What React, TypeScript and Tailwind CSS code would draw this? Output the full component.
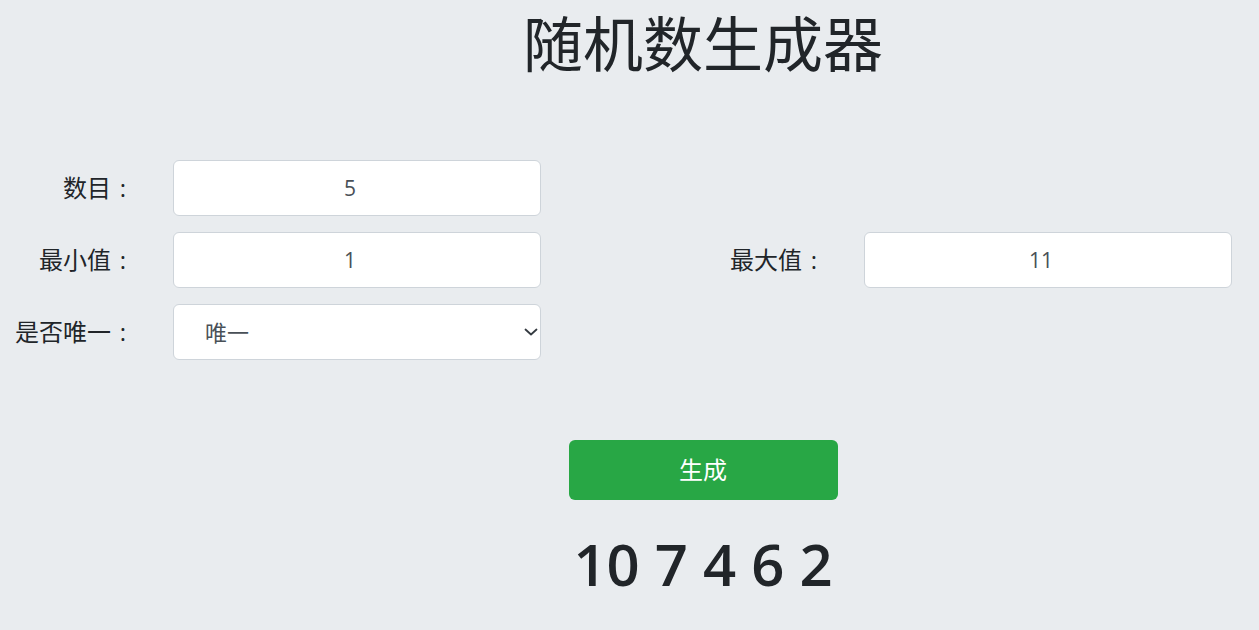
import React, { useState } from "react";

const font = { fontFamily: '"Open Sans", "Noto Sans CJK SC", sans-serif' };

// label + input pair, label is right aligned in a 135px box
const Field: React.FC<{ label: string; children: React.ReactNode }> = ({ label, children }) => (
	<div className="flex items-center gap-[38px]">
		<label className="w-[135px] flex justify-end text-[24px] text-[#212529]">
			<span>{label}</span>
			<span className="w-[24px] text-center">:</span>
		</label>
		{children}
	</div>
);

export default function App() {
	const [count, setCount] = useState("5");
	const [min, setMin] = useState("1");
	const [max, setMax] = useState("11");
	const [unique, setUnique] = useState("唯一");
	const [result] = useState([10, 7, 4, 6, 2]);

	const inputCls =
		"w-[368px] h-[56px] bg-white border border-[#ced4da] rounded-[6px] pl-[12px] pr-[26px] text-center text-[21px] text-[#495057] outline-none";

	return (
		<div className="min-h-[630px] bg-[#e9ecef]" style={font}>
			<h1 className="pl-[147px] pt-[8px] text-center text-[60px] leading-[72px] text-[#212529]">随机数生成器</h1>

			<div className="mt-[80px] grid grid-cols-[691px_1fr] gap-y-[16px]">
				<Field label="数目">
					<input className={inputCls} value={count} onChange={(e) => setCount(e.target.value)} />
				</Field>
				<div />
				<Field label="最小值">
					<input className={inputCls} value={min} onChange={(e) => setMin(e.target.value)} />
				</Field>
				<Field label="最大值">
					<input className={inputCls} value={max} onChange={(e) => setMax(e.target.value)} />
				</Field>
				<Field label="是否唯一">
					<div className="relative w-[368px] h-[56px]">
						<select
							className="appearance-none w-full h-full bg-white border border-[#ced4da] rounded-[6px] pl-[31px] text-[22px] text-[#495057] outline-none"
							value={unique}
							onChange={(e) => setUnique(e.target.value)}
						>
							<option>唯一</option>
							<option>不唯一</option>
						</select>
						<svg
							className="absolute right-[3px] top-[24px] pointer-events-none"
							width="14"
							height="8"
							viewBox="0 0 14 8"
							fill="none"
							stroke="#343a40"
							strokeWidth="1.8"
							strokeLinecap="round"
							strokeLinejoin="round"
						>
							<path d="M1.5 1.5l5.5 5 5.5-5" />
						</svg>
					</div>
				</Field>
			</div>

			<div className="pl-[147px] mt-[80px] flex flex-col items-center">
				<button className="w-[269px] h-[60px] bg-[#28a745] rounded-[6px] text-white text-[24px]">生成</button>
				<div className="mt-[24px] text-[58px] font-semibold leading-[80px] text-[#212529]">{result.join(" ")}</div>
			</div>
		</div>
	);
}
